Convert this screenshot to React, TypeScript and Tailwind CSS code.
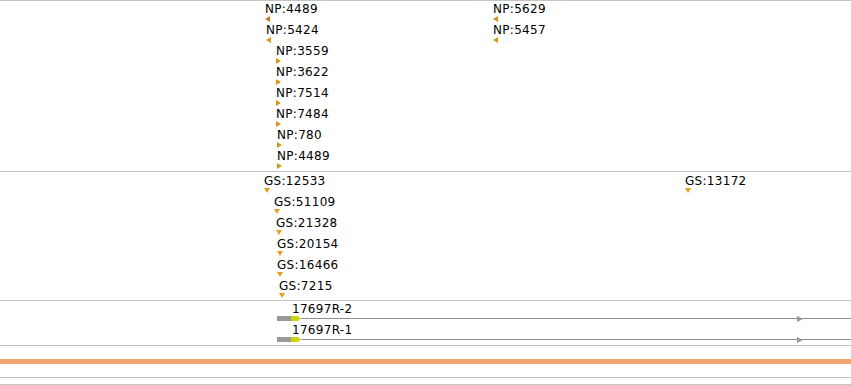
import React from "react";

const font = { fontFamily: '"DejaVu Sans", sans-serif' };

function Tri({ dir, color }: { dir: "l" | "r" | "d"; color: string }) {
  if (dir === "d")
    return (
      <svg width="6" height="5" viewBox="0 0 6 5" className="block">
        <polygon points="0,0 6,0 3,5" fill={color} />
      </svg>
    );
  if (dir === "l")
    return (
      <svg width="5" height="6" viewBox="0 0 5 6" className="block">
        <polygon points="5,0 5,6 0,3" fill={color} />
      </svg>
    );
  return (
    <svg width="5" height="6" viewBox="0 0 5 6" className="block">
      <polygon points="0,0 0,6 5,3" fill={color} />
    </svg>
  );
}

function Feature({ x, y, label, dir, color = "#d6951b" }: { x: number; y: number; label: string; dir: "l" | "r" | "d"; color?: string }) {
  return (
    <div className="absolute flex flex-col items-start" style={{ left: x, top: y }}>
      <div className="text-[12px] leading-[12px] tracking-[0.3px] text-black whitespace-nowrap">{label}</div>
      <div className="mt-[1px]">
        <Tri dir={dir} color={color} />
      </div>
    </div>
  );
}

function Transcript({ label }: { label: string }) {
  return (
    <div className="flex flex-col h-[21px]">
      <div className="pl-[292px] pt-[2px] text-[12px] leading-[12px] tracking-[0.3px] text-black whitespace-nowrap">{label}</div>
      <div className="flex items-center mt-[1px] h-[5px]">
        <div className="ml-[277px] w-[14px] h-[5px] bg-[#999999] shrink-0" />
        <svg width="10" height="5" viewBox="0 0 10 5" className="block shrink-0">
          <polygon points="0,0 7,0 10,2.5 7,5 0,5" fill="#c8d60a" />
        </svg>
        <div className="relative flex-1 h-px bg-[#909090]">
          <svg className="absolute left-[496px] top-[-2.5px]" width="6" height="6" viewBox="0 0 6 6">
            <polygon points="0,0 6,3 0,6" fill="#9a9a9a" />
          </svg>
        </div>
      </div>
    </div>
  );
}

export default function App() {
  const np1: [number, string, "l" | "r", string?][] = [
    [265, "NP:4489", "l", "#c8781e"],
    [266, "NP:5424", "l"],
    [276, "NP:3559", "r"],
    [276, "NP:3622", "r"],
    [276, "NP:7514", "r"],
    [276, "NP:7484", "r"],
    [277, "NP:780", "r"],
    [277, "NP:4489", "r"],
  ];
  const gs: [number, string][] = [
    [264, "GS:12533"],
    [274, "GS:51109"],
    [276, "GS:21328"],
    [277, "GS:20154"],
    [277, "GS:16466"],
    [279, "GS:7215"],
  ];
  return (
    <div className="w-[851px] h-[385px] bg-white overflow-hidden flex flex-col" style={font}>
      <div className="relative h-[172px] border-t border-b border-[#c4c4c4] shrink-0">
        {np1.map(([x, l, d, c], i) => (
          <Feature key={i} x={x} y={2 + i * 21} label={l} dir={d} color={c} />
        ))}
        <Feature x={493} y={2} label="NP:5629" dir="l" />
        <Feature x={493} y={23} label="NP:5457" dir="l" />
      </div>
      <div className="relative h-[129px] border-b border-[#c4c4c4] shrink-0">
        {gs.map(([x, l], i) => (
          <Feature key={i} x={x} y={3 + i * 21} label={l} dir="d" color="#e6a01e" />
        ))}
        <Feature x={685} y={3} label="GS:13172" dir="d" color="#e6a01e" />
      </div>
      <div className="flex flex-col h-[45px] border-b border-[#c4c4c4] shrink-0">
        <Transcript label="17697R-2" />
        <Transcript label="17697R-1" />
      </div>
      <div className="h-[13px] shrink-0" />
      <div className="h-[5px] bg-[#f3a36f] shrink-0" />
      <div className="h-[14px] border-b border-[#c4c4c4] shrink-0" />
      <div className="h-[7px] border-b border-[#c4c4c4] shrink-0" />
    </div>
  );
}
